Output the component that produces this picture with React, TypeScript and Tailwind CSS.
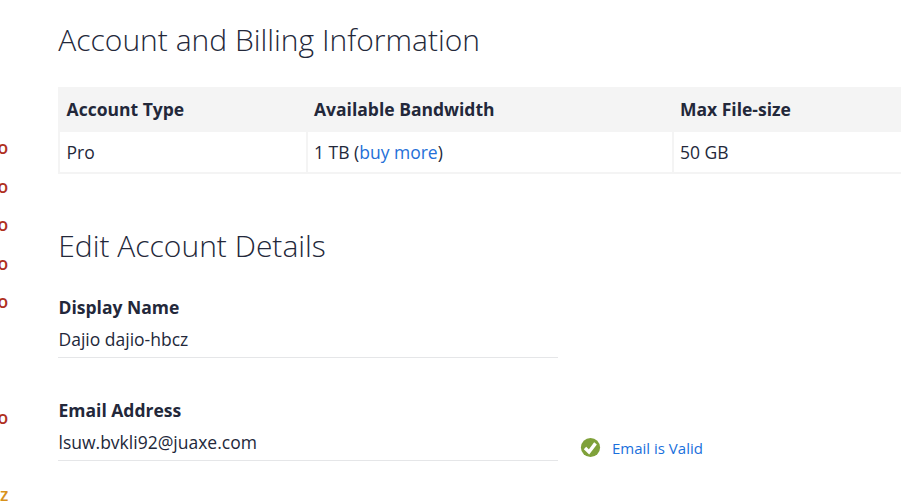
const marks = [
  { text: "o", top: "mt-[136px]", indent: "-ml-[2.5px]", color: "text-[#b0301f]" },
  { text: "o", top: "mt-[17px]", indent: "-ml-[2.5px]", color: "text-[#b0301f]" },
  { text: "o", top: "mt-[16px]", indent: "-ml-[2.5px]", color: "text-[#b0301f]" },
  { text: "o", top: "mt-[17px]", indent: "-ml-[2.5px]", color: "text-[#b0301f]" },
  { text: "o", top: "mt-[16px]", indent: "-ml-[2.5px]", color: "text-[#b0301f]" },
  { text: "o", top: "mt-[94px]", indent: "-ml-[2.5px]", color: "text-[#b0301f]" },
  { text: "z", top: "mt-[55px]", indent: "ml-0", color: "text-[#d8921c]" },
];

function Field({ label, value }: { label: string; value: string }) {
  return (
    <div className="h-[63px] w-[500px] shrink-0 border-b border-[#e5e6e8] pl-[0.5px]">
      <div className="h-[32px] leading-[24px] font-bold">{label}</div>
      <div className="leading-[24px]">{value}</div>
    </div>
  );
}

export default function App() {
  return (
    <div className="flex h-[501px] w-[901px] overflow-hidden bg-white font-['Open_Sans',sans-serif] text-[17.5px] text-[#23283a]">
      <aside className="w-[58px] shrink-0 overflow-hidden">
        {marks.map((m, i) => (
          <div key={i} className={`h-[22px] text-[17.5px] leading-[22px] font-semibold ${m.top} ${m.indent} ${m.color}`}>
            {m.text}
          </div>
        ))}
      </aside>
      <main className="w-[843px] shrink-0">
        <h1 className="mt-[20px] h-[67px] pl-[0.3px] text-[30px] leading-[40px] font-light whitespace-nowrap">Account and Billing Information</h1>
        <div className="grid h-[45px] grid-cols-[248px_366px_1fr] items-center bg-[#f4f4f4] font-bold">
          <div className="pl-[8.6px]">Account Type</div>
          <div className="pl-[8px]">Available Bandwidth</div>
          <div className="pl-[8px]">Max File-size</div>
        </div>
        <div className="grid h-[42px] grid-cols-[248px_366px_1fr] border-b-2 border-[#f4f4f4] leading-[41px]">
          <div className="border-l-2 border-[#f4f4f4] pl-[6.6px]">Pro</div>
          <div className="border-l-2 border-[#f4f4f4] pl-[6px]">1 TB (<a className="text-[#2470d8]">buy more</a>)</div>
          <div className="border-l-2 border-[#f4f4f4] pl-[6px]">50 GB</div>
        </div>
        <h2 className="mt-[52px] h-[69px] pl-[0.3px] text-[30px] leading-[40px] font-light">Edit Account Details</h2>
        <Field label="Display Name" value="Dajio dajio-hbcz" />
        <div className="mt-[40px] flex">
          <Field label="Email Address" value="lsuw.bvkli92@juaxe.com" />
          <div className="mt-[40px] ml-[22px] flex h-[20px] items-center text-[15px] text-[#1a70dc]">
            <svg className="-mt-[2px]" width="21" height="21" viewBox="0 0 21 21">
              <circle cx="10.5" cy="10.5" r="9.6" fill="#7fa13a" />
              <path d="M5 11 9 15 15.5 6.4" fill="none" stroke="white" strokeWidth="3.4" />
            </svg>
            <span className="ml-[11px]">Email is Valid</span>
          </div>
        </div>
      </main>
    </div>
  );
}
